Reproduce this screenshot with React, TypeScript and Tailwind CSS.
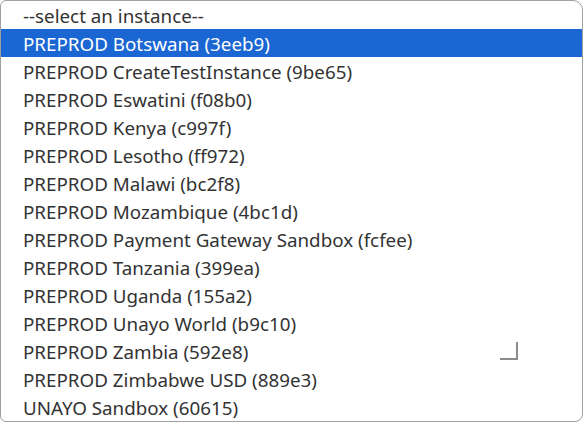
import React from 'react';

const options = [
  '--select an instance--',
  'PREPROD Botswana (3eeb9)',
  'PREPROD CreateTestInstance (9be65)',
  'PREPROD Eswatini (f08b0)',
  'PREPROD Kenya (c997f)',
  'PREPROD Lesotho (ff972)',
  'PREPROD Malawi (bc2f8)',
  'PREPROD Mozambique (4bc1d)',
  'PREPROD Payment Gateway Sandbox (fcfee)',
  'PREPROD Tanzania (399ea)',
  'PREPROD Uganda (155a2)',
  'PREPROD Unayo World (b9c10)',
  'PREPROD Zambia (592e8)',
  'PREPROD Zimbabwe USD (889e3)',
  'UNAYO Sandbox (60615)',
];

const App: React.FC = () => {
  return (
    <div className="w-[583px] h-[423px] bg-white overflow-hidden" style={{ fontFamily: '"Noto Sans", "Open Sans", sans-serif' }}>
      <div className="relative w-full h-[422px] border border-[#a0a0a0] rounded-tl-[6px] rounded-tr-[10px] rounded-br-[8px] rounded-bl-[6px] overflow-hidden">
        <ul className="flex flex-col">
          {options.map((o, i) => (
            <li
              key={o}
              className={`h-[28px] pl-[22px] pt-[3px] flex items-center text-[18.8px] leading-none ${
                i === 1 ? 'bg-[#1a66d2] text-white' : 'text-[#333333]'
              }`}
            >
              {o}
            </li>
          ))}
        </ul>
        {/* resize grip */}
        <div className="absolute left-[499px] top-[341px] w-[18px] h-[18px] border-r-2 border-b-2 border-[#8c8c8c]" />
      </div>
    </div>
  );
};

export default App;
